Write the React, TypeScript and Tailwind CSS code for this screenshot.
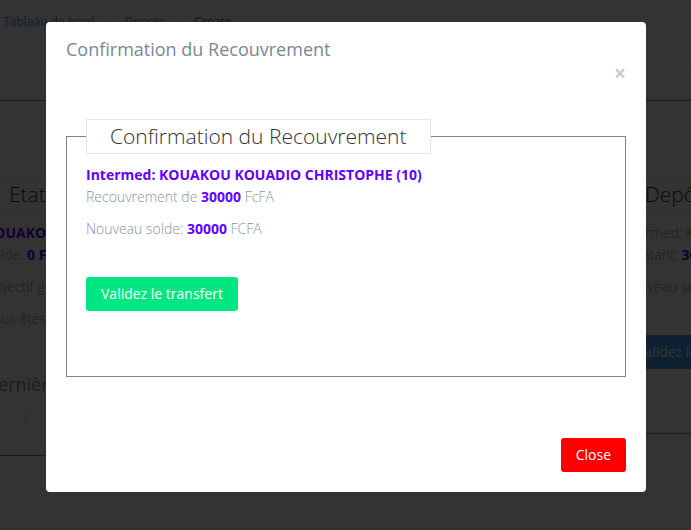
import React from "react";
import { ChevronRight } from "lucide-react";

function Amount({ children }: { children: React.ReactNode }) {
  return <strong className="font-bold text-[#6200ff]">{children}</strong>;
}

type PanelProps = { title: string; className?: string; children: React.ReactNode };

function Panel({ title, className = "", children }: PanelProps) {
  return (
    <fieldset className={`min-w-0 border border-[#808080] px-[19px] ${className}`}>
      <legend className="border border-[#e5e5e5] px-[23px] text-[21px] leading-[33px] whitespace-nowrap text-[#333]">
        {title}
      </legend>
      {children}
    </fieldset>
  );
}

function Page() {
  return (
    <div aria-hidden="true" className="h-full overflow-hidden bg-white">
      <nav className="h-[66px] border-b border-[#eee] pt-3 pl-[3px] text-xs leading-5">
        <ol className="flex items-center gap-[10px] font-normal">
          <li><a href="#tableau" className="text-[#3a9cf5]">Tableau de bord</a></li>
          <li className="text-[#bbb]"><ChevronRight size={10} strokeWidth={2} /></li>
          <li><a href="#depots" className="text-[#3a9cf5]">Depots</a></li>
          <li className="text-[#bbb]"><ChevronRight size={10} strokeWidth={2} /></li>
          <li className="text-[#555]">Create</li>
        </ol>
      </nav>
      <hr className="mt-[34px] border-[#808080]" />
      <div className="-ml-[35px] grid grid-cols-[318px_318px_318px] items-start pt-[76px]">
        <Panel title="Etat du compte" className="h-[279px]">
          <p className="mt-[10px] font-bold text-[#6200ff]">KOUAKOU KOUADIO</p>
          <p>Solde: <Amount>0 FCFA</Amount></p>
          <p className="mt-[10px]">Objectif global</p>
          <p className="mt-[10px]">Vous êtes à jour</p>
          <h4 className="mt-[42px] text-lg leading-6 font-normal">Dernière opération</h4>
          <p className="mt-2 pl-10">;</p>
        </Panel>
        <Panel title="Depôt" className="col-start-3 h-[257px]">
          <p className="mt-[10px]">Intermed: KOUAKOU</p>
          <p>Montant: <Amount>30000</Amount></p>
          <p className="mt-[10px]">Nouveau solde</p>
          <button tabIndex={-1} className="mt-[37px] h-[34px] rounded-[3px] bg-[#4ba2ff] px-[15px] font-normal text-white">
            Validez le transfert
          </button>
        </Panel>
      </div>
    </div>
  );
}

export default function App() {
  return (
    <div className="relative h-screen overflow-hidden font-['Open_Sans','Noto_Sans',sans-serif] text-sm leading-[22px] font-light text-[#8792a3]">
      <Page />
      <div className="absolute inset-0 flex items-start justify-center overflow-auto bg-black/80 pt-[22px] pl-px">
        <section role="dialog" aria-modal="true" aria-labelledby="dialog-title" className="w-[600px] max-w-full rounded-sm bg-white p-5">
          <header className="-mt-1">
            <h2 id="dialog-title" className="text-lg leading-[22px] font-normal text-[#7a8798]">
              Confirmation du Recouvrement
            </h2>
            <div className="flex justify-end">
              <button aria-label="Fermer" className="text-[21px] leading-[26px] font-bold text-[#ccc]">×</button>
            </div>
          </header>
          <Panel title="Confirmation du Recouvrement" className="mt-[33px] pb-[65px]">
            <p className="mt-[10px] font-bold text-[#6200ff]">Intermed: KOUAKOU KOUADIO CHRISTOPHE (10)</p>
            <p>Recouvrement de <Amount>30000</Amount> FcFA</p>
            <p className="mt-[10px]">Nouveau solde: <Amount>30000</Amount> FCFA</p>
            <button className="mt-[37px] h-[34px] rounded-[3px] bg-[#00e682] px-[15px] font-normal text-white">
              Validez le transfert
            </button>
          </Panel>
          <footer className="mt-[61px] flex justify-end">
            <button className="h-[34px] rounded-[3px] bg-[#ff0000] px-[15px] font-normal text-white">Close</button>
          </footer>
        </section>
      </div>
    </div>
  );
}
